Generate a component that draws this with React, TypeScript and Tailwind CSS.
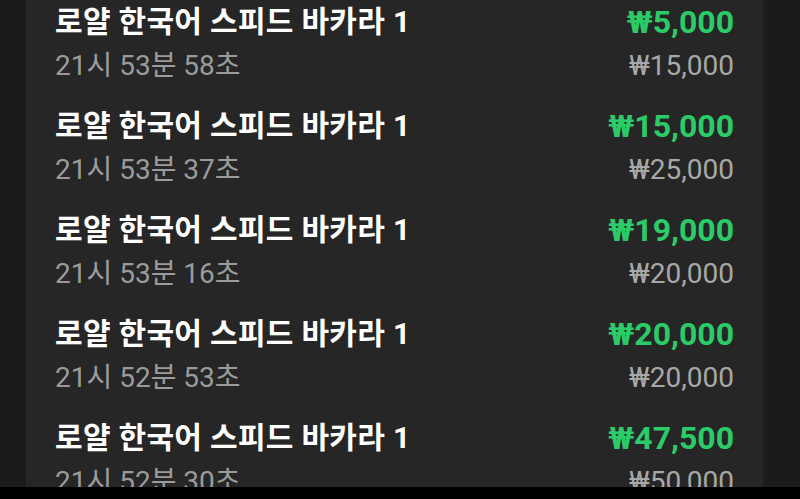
import React from "react";

const rows = [
  { time: "21시 53분 58초", win: "₩5,000", bet: "₩15,000" },
  { time: "21시 53분 37초", win: "₩15,000", bet: "₩25,000" },
  { time: "21시 53분 16초", win: "₩19,000", bet: "₩20,000" },
  { time: "21시 52분 53초", win: "₩20,000", bet: "₩20,000" },
  { time: "21시 52분 30초", win: "₩47,500", bet: "₩50,000" },
];

export default function App() {
  return (
    <div
      className="w-[800px] h-[499px] overflow-hidden bg-[#1b1b1b] flex flex-col"
      style={{ fontFamily: 'Roboto, "Noto Sans CJK KR", "Noto Sans", sans-serif' }}
    >
      <div className="flex-1 overflow-hidden px-[26px] flex">
        <div className="flex-1 bg-[#262626] overflow-hidden px-[29px] mr-[11px]">
          <div className="-mt-[9px] flex flex-col">
            {rows.map((r, i) => (
              <div key={i} className="flex justify-between items-start py-[14px] h-[104px]">
                <div className="flex flex-col gap-[11px]">
                  <div className="text-[30px] leading-[34px] font-bold text-white whitespace-nowrap tracking-[0.3px]">
                    로얄 한국어 스피드 바카라 1
                  </div>
                  <div className="text-[28px] leading-[32px] text-[#9b9b9b] whitespace-nowrap">
                    {r.time}
                  </div>
                </div>
                <div className="flex flex-col items-end gap-[11px]">
                  <div className="text-[32px] leading-[34px] font-bold text-[#2bcc68] whitespace-nowrap">
                    {r.win}
                  </div>
                  <div className="text-[28px] leading-[32px] text-[#a8a8a8] whitespace-nowrap">
                    {r.bet}
                  </div>
                </div>
              </div>
            ))}
          </div>
        </div>
      </div>
      <div className="h-[12px] bg-black" />
    </div>
  );
}
